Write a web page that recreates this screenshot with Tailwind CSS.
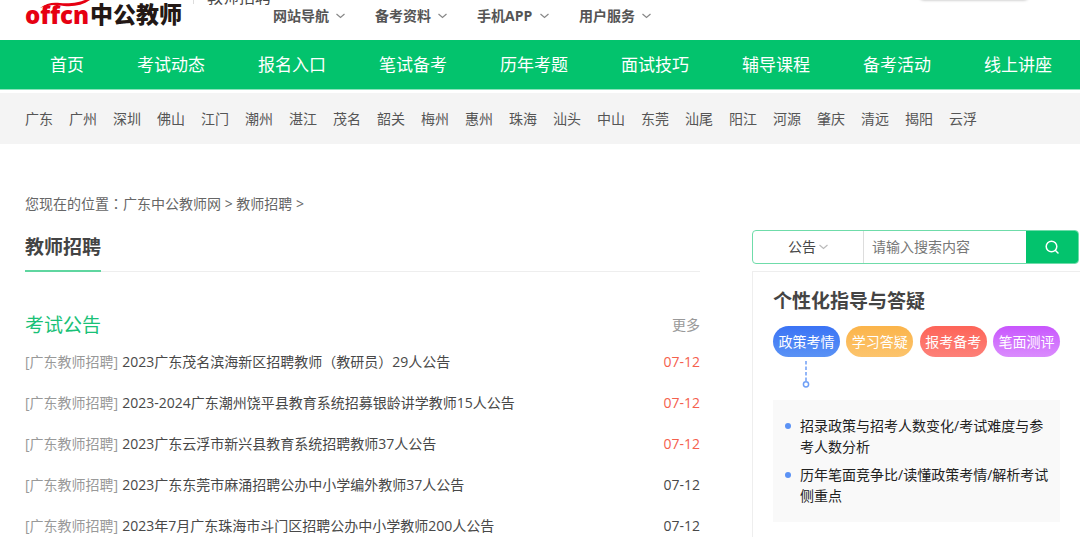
<!DOCTYPE html>
<html lang="zh-CN">
<head>
<meta charset="utf-8">
<meta name="viewport" content="width=device-width, initial-scale=1">
<title>教师招聘 - 广东中公教师网</title>
<script src="https://cdn.jsdelivr.net/npm/@tailwindcss/browser@4"></script>
</head>
<body class="overflow-x-hidden bg-white font-['Open_Sans','Noto_Sans_CJK_SC',sans-serif] text-sm text-[#484848]">

<header class="flex h-10 items-start overflow-hidden pl-[25px]">
  <a href="#" class="flex w-[168px] shrink-0 items-start whitespace-nowrap" aria-label="中公教师">
    <span class="relative w-[65px] text-2xl leading-[30px] font-extrabold text-[#e60012]">offcn
      <svg class="absolute top-0 left-[15px]" width="50" height="10" viewBox="0 0 50 10" fill="#e60012" aria-hidden="true"><path d="M0 8C6 3 13 2 20 3C31 4 40 2 45 0H50C43 5 34 7 24 6C14 4 7 5 0 8Z"/></svg>
    </span>
    <span class="text-[23px] leading-7 font-black text-[#231815]">中公教师</span>
  </a>
  <div class="-mt-3 h-4 border-l border-[#ddd]"></div>
  <div class="-mt-[11px] ml-[13px] w-[66px] shrink-0 text-base leading-4 whitespace-nowrap">教师招聘</div>
  <nav class="flex gap-[30px] pt-[6px] leading-5 font-bold whitespace-nowrap text-[#555]">
    <a href="#" class="flex w-[72px] items-center justify-between">网站导航<svg width="9" height="6" viewBox="0 0 9 6" fill="none" stroke="#888" stroke-width="1.2"><path d="M.5 1 4.500 4.500 8.500 1"/></svg></a>
    <a href="#" class="flex w-[72px] items-center justify-between">备考资料<svg width="9" height="6" viewBox="0 0 9 6" fill="none" stroke="#888" stroke-width="1.2"><path d="M.5 1 4.500 4.500 8.500 1"/></svg></a>
    <a href="#" class="flex w-[72px] items-center justify-between">手机APP<svg width="9" height="6" viewBox="0 0 9 6" fill="none" stroke="#888" stroke-width="1.2"><path d="M.5 1 4.500 4.500 8.500 1"/></svg></a>
    <a href="#" class="flex w-[72px] items-center justify-between">用户服务<svg width="9" height="6" viewBox="0 0 9 6" fill="none" stroke="#888" stroke-width="1.2"><path d="M.5 1 4.500 4.500 8.500 1"/></svg></a>
  </nav>
  <div class="-mt-2 mr-[52px] ml-auto h-2 w-[108px] rounded-sm shadow-[0_0_3px_#aaa]"></div>
</header>

<nav class="flex h-[50px] items-center gap-[53px] overflow-hidden border-b border-[#8be3bc] bg-[#03c36d] pt-[2px] pl-[50px] text-[17px] whitespace-nowrap text-white">
  <a href="#">首页</a>
  <a href="#">考试动态</a>
  <a href="#">报名入口</a>
  <a href="#">笔试备考</a>
  <a href="#">历年考题</a>
  <a href="#">面试技巧</a>
  <a href="#">辅导课程</a>
  <a href="#">备考活动</a>
  <a href="#">线上讲座</a>
</nav>

<nav class="mt-[3px] flex h-[51px] items-center gap-4 bg-[#f4f4f4] pl-[25px] whitespace-nowrap text-[#555]">
  <a href="#">广东</a><a href="#">广州</a><a href="#">深圳</a><a href="#">佛山</a><a href="#">江门</a><a href="#">潮州</a><a href="#">湛江</a><a href="#">茂名</a><a href="#">韶关</a><a href="#">梅州</a><a href="#">惠州</a><a href="#">珠海</a><a href="#">汕头</a><a href="#">中山</a><a href="#">东莞</a><a href="#">汕尾</a><a href="#">阳江</a><a href="#">河源</a><a href="#">肇庆</a><a href="#">清远</a><a href="#">揭阳</a><a href="#">云浮</a>
</nav>

<div class="mt-[49px] pl-[25px] leading-5 text-[#666]">您现在的位置<span lang="zh-TW" class="font-['Noto_Sans_CJK_TC',sans-serif]">：</span><a href="#">广东中公教师网</a> &gt; <a href="#">教师招聘</a> &gt;</div>

<div class="mt-4 flex items-stretch gap-[52px] pl-[25px]">
  <main class="min-w-0 flex-1">
    <div class="flex border-b border-[#eee]">
      <h1 class="-mb-px h-[42px] border-b-2 border-[#5fd6a0] text-[19px] leading-[34px] font-bold text-[#444]">教师招聘</h1>
    </div>
    <div class="mt-[39px] flex h-7 items-center justify-between">
      <h2 class="pt-[2px] text-[19px] text-[#19c177]">考试公告</h2>
      <a href="#" class="text-[#999]">更多</a>
    </div>
    <ul class="mt-[2px] leading-[41px] whitespace-nowrap">
      <li class="flex"><a href="#" class="mr-1 text-[#999]">[广东教师招聘]</a><a href="#">2023广东茂名滨海新区招聘教师（教研员）29人公告</a><time class="ml-auto text-[#f5604d]">07-12</time></li>
      <li class="flex"><a href="#" class="mr-1 text-[#999]">[广东教师招聘]</a><a href="#">2023-2024广东潮州饶平县教育系统招募银龄讲学教师15人公告</a><time class="ml-auto text-[#f5604d]">07-12</time></li>
      <li class="flex"><a href="#" class="mr-1 text-[#999]">[广东教师招聘]</a><a href="#">2023广东云浮市新兴县教育系统招聘教师37人公告</a><time class="ml-auto text-[#f5604d]">07-12</time></li>
      <li class="flex"><a href="#" class="mr-1 text-[#999]">[广东教师招聘]</a><a href="#">2023广东东莞市麻涌招聘公办中小学编外教师37人公告</a><time class="ml-auto">07-12</time></li>
      <li class="flex"><a href="#" class="mr-1 text-[#999]">[广东教师招聘]</a><a href="#">2023年7月广东珠海市斗门区招聘公办中小学教师200人公告</a><time class="ml-auto">07-12</time></li>
    </ul>
  </main>

  <aside class="flex w-[328px] shrink-0 flex-col">
    <form class="mr-px flex h-[34px] overflow-hidden rounded border border-[#6fdcaa]">
      <div class="relative w-[111px] border-r border-[#ddd]">
        <select aria-label="搜索类别" class="h-full w-full appearance-none pl-[35px] outline-none">
          <option>公告</option>
        </select>
        <svg class="pointer-events-none absolute top-[13px] left-[66px]" width="9" height="6" viewBox="0 0 9 6" fill="none" stroke="#bbb" stroke-width="1.2"><path d="M.5 1 4.500 4.500 8.500 1"/></svg>
      </div>
      <input type="text" aria-label="搜索内容" placeholder="请输入搜索内容" class="min-w-0 flex-1 px-2 outline-none placeholder:text-[#777]">
      <button type="button" aria-label="搜索" class="flex w-[52px] items-center justify-center bg-[#03c36d]">
        <svg width="14" height="14" viewBox="0 0 14 14" fill="none" stroke="#fff" stroke-width="1.500" stroke-linecap="round"><circle cx="6.500" cy="6.500" r="5.300"/><path d="m10.500 10.500 2.500 2.500"/></svg>
      </button>
    </form>

    <section class="mt-[7px] flex-1 border-t border-l border-[#eee] pr-5 pl-5">
      <h2 class="mt-[15px] text-[19px] leading-7 font-bold text-[#444]">个性化指导与答疑</h2>
      <div class="mt-[11px] flex justify-between whitespace-nowrap text-white">
        <button type="button" class="h-[31px] w-[67px] rounded-full bg-linear-to-b from-[#3b73f5] to-[#5a92f5]">政策考情</button>
        <button type="button" class="h-[31px] w-[67px] rounded-full bg-linear-to-b from-[#fbb44a] to-[#fcc46c]">学习答疑</button>
        <button type="button" class="h-[31px] w-[67px] rounded-full bg-linear-to-b from-[#fd6458] to-[#fd8078]">报考备考</button>
        <button type="button" class="h-[31px] w-[67px] rounded-full bg-linear-to-b from-[#c855fd] to-[#da8bfd]">笔面测评</button>
      </div>
      <svg class="mt-1 ml-[29px]" width="8" height="27" viewBox="0 0 8 27" fill="none" stroke="#6f9ff6" stroke-width="1.500" aria-hidden="true"><path d="M4 0V20" stroke-dasharray="3.500 2"/><circle cx="4" cy="23.300" r="2.600"/></svg>
      <ul class="mt-3 flex flex-col gap-[7px] bg-[#f9f9f9] pt-[15px] pr-[7px] pb-4 pl-3 leading-[21px] text-[#222]">
        <li class="flex gap-[9px]"><span class="mt-2 size-[6px] shrink-0 rounded-full bg-[#5b92f5]"></span><span>招录政策与招考人数变化/考试难度与参考人数分析</span></li>
        <li class="flex gap-[9px]"><span class="mt-2 size-[6px] shrink-0 rounded-full bg-[#5b92f5]"></span><span>历年笔面竞争比/读懂政策考情/解析考试侧重点</span></li>
      </ul>
    </section>
  </aside>
</div>
</body>
</html>
